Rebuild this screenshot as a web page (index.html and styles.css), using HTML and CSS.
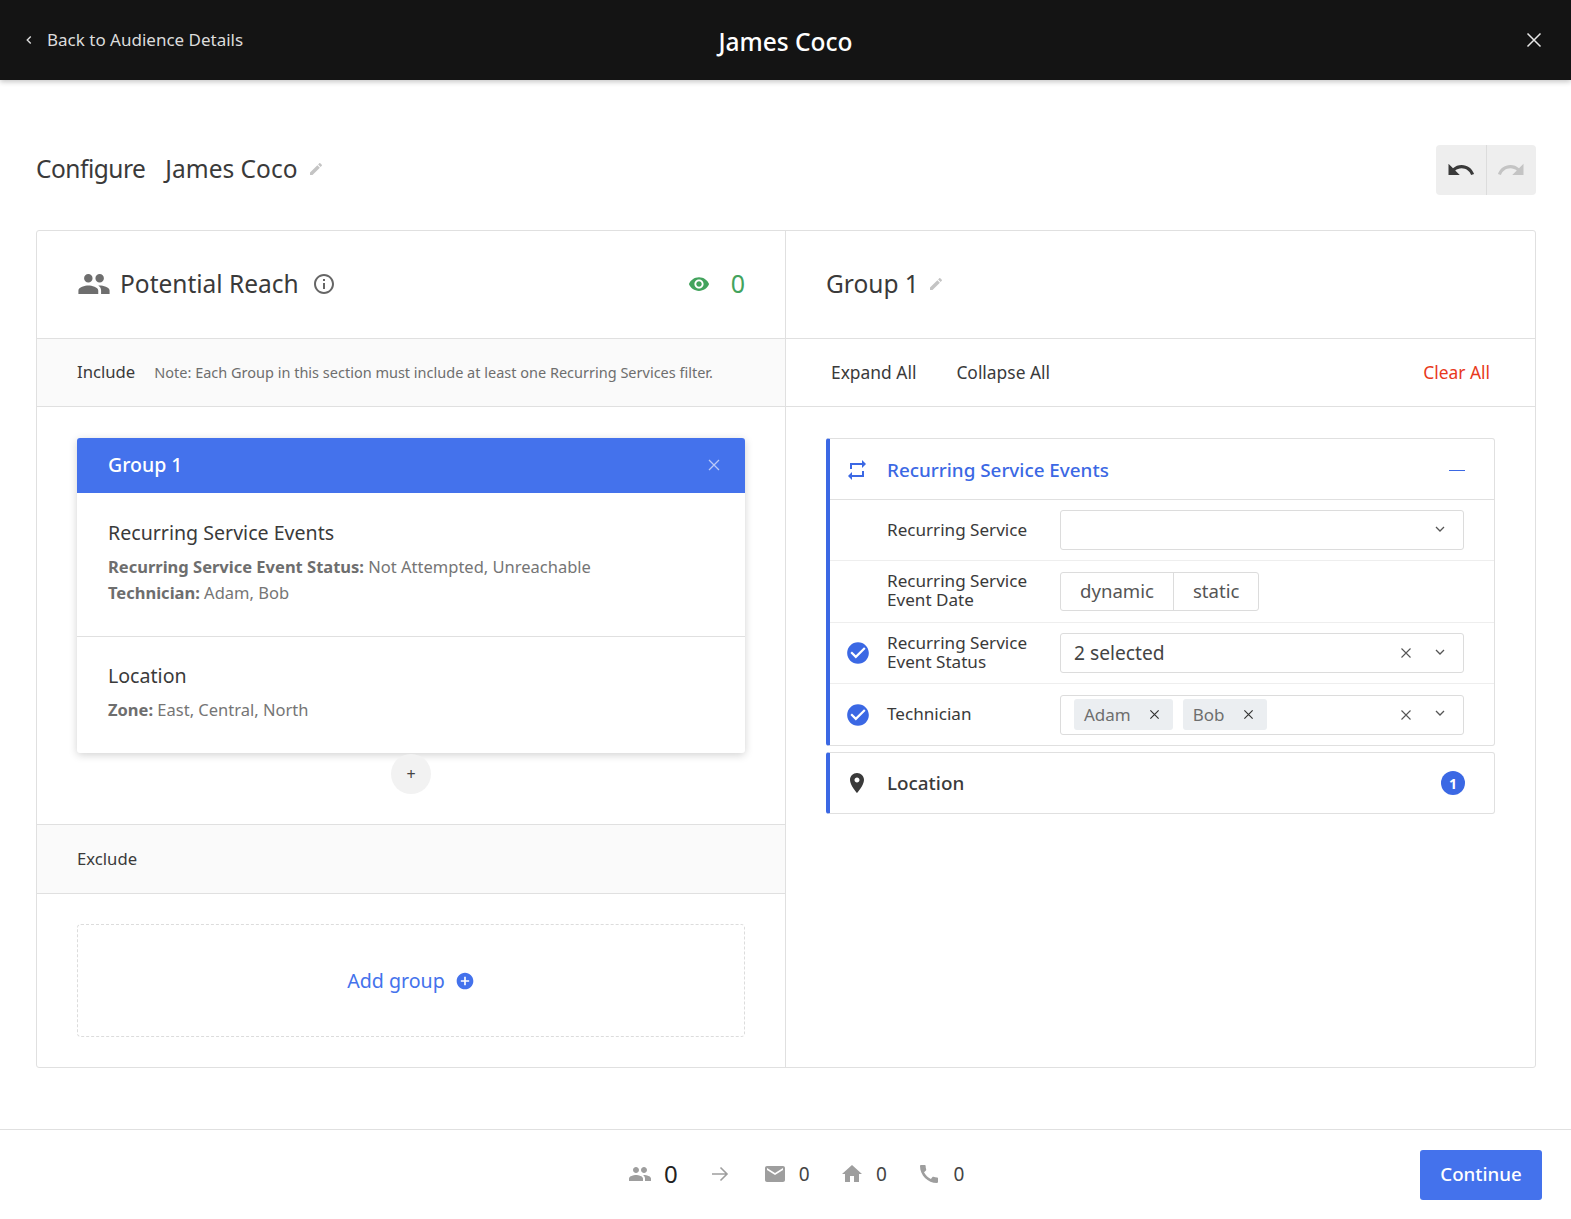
FILE: index.html
```html
<!DOCTYPE html>
<html lang="en">
<head>
<meta charset="utf-8">
<title>James Coco</title>
<link rel="stylesheet" href="styles.css">
</head>
<body>
<header class="topbar">
  <a class="back"><svg class="back-icon" viewBox="0 0 8 12"><path d="M5.500 3 2.500 6l3 3" fill="none" stroke="#ddd" stroke-width="1.2"/></svg>Back to Audience Details</a>
  <div class="topbar-title">James Coco</div>
  <svg class="close-icon" viewBox="0 0 16 16"><path d="M1.500 1.500l13 13M14.500 1.500l-13 13" stroke="#e8e8e8" stroke-width="1.500" fill="none"/></svg>
</header>
<main class="content">
  <div class="title-row">
    <div class="title"><span class="title-label">Configure</span><span>James Coco</span>
      <svg class="pencil pencil-title" viewBox="0 0 24 24"><path d="M3 17.250V21h3.750L17.810 9.940l-3.750-3.750L3 17.250zM20.710 7.040c.39-.39.39-1.020 0-1.410l-2.340-2.340c-.39-.39-1.020-.39-1.410 0l-1.830 1.830 3.750 3.750 1.830-1.830z"/></svg>
    </div>
    <div class="history">
      <button class="history-btn"><svg viewBox="0 0 24 24"><path fill="#3a3a3a" d="M12.500 8c-2.650 0-5.050.99-6.900 2.600L2 7v9h9l-3.620-3.620c1.390-1.160 3.160-1.880 5.120-1.880 3.540 0 6.550 2.310 7.600 5.500l2.370-.78C21.080 11.030 17.150 8 12.500 8z"/></svg></button>
      <button class="history-btn"><svg viewBox="0 0 24 24"><path fill="#c4c4c4" d="M18.400 10.600C16.550 8.990 14.150 8 11.500 8c-4.650 0-8.580 3.030-9.960 7.220L3.900 16c1.050-3.190 4.050-5.500 7.600-5.500 1.950 0 3.730.72 5.120 1.880L13 16h9V7l-3.600 3.600z"/></svg></button>
    </div>
  </div>
  <section class="board">
    <div class="col col-left">
      <div class="head-row">
        <div class="reach">
          <svg class="reach-people" viewBox="0 0 24 24"><path d="M16 11c1.660 0 2.990-1.340 2.990-3S17.660 5 16 5c-1.660 0-3 1.340-3 3s1.340 3 3 3zm-8 0c1.660 0 2.990-1.340 2.990-3S9.660 5 8 5C6.340 5 5 6.340 5 8s1.340 3 3 3zm0 2c-2.330 0-7 1.170-7 3.500V19h14v-2.500c0-2.330-4.670-3.500-7-3.500zm8 0c-.29 0-.62.02-.97.05 1.160.84 1.970 1.970 1.970 3.450V19h6v-2.500c0-2.330-4.670-3.500-7-3.500z"/></svg>
          <span class="heading">Potential Reach</span>
          <svg class="info" viewBox="0 0 24 24"><path d="M11 7h2v2h-2zm0 4h2v6h-2zm1-9C6.480 2 2 6.480 2 12s4.480 10 10 10 10-4.480 10-10S17.520 2 12 2zm0 18c-4.410 0-8-3.590-8-8s3.590-8 8-8 8 3.590 8 8-3.590 8-8 8z"/></svg>
        </div>
        <div class="reach-count">
          <svg class="eye" viewBox="0 0 24 24"><path d="M12 4.500C7 4.500 2.730 7.610 1 12c1.730 4.390 6 7.500 11 7.500s9.270-3.110 11-7.500c-1.730-4.390-6-7.500-11-7.500zM12 17c-2.760 0-5-2.240-5-5s2.240-5 5-5 5 2.240 5 5-2.240 5-5 5zm0-8c-1.660 0-3 1.340-3 3s1.340 3 3 3 3-1.340 3-3-1.340-3-3-3z"/></svg>
          <span>0</span>
        </div>
      </div>
      <div class="band"><span class="band-label">Include</span><span class="band-note">Note: Each Group in this section must include at least one Recurring Services filter.</span></div>
      <div class="include-body">
        <article class="group-card">
          <div class="group-head"><span>Group 1</span><svg class="group-x" viewBox="0 0 12 12"><path d="M1 1l10 10M11 1 1 11" stroke="#b9c9f7" stroke-width="1.300" fill="none"/></svg></div>
          <div class="group-item">
            <h3>Recurring Service Events</h3>
            <p><b>Recurring Service Event Status:</b> Not Attempted, Unreachable</p>
            <p><b>Technician:</b> Adam, Bob</p>
          </div>
          <div class="group-item group-item-last">
            <h3>Location</h3>
            <p><b>Zone:</b> East, Central, North</p>
          </div>
        </article>
        <button class="add-round">+</button>
      </div>
      <div class="band band-exclude"><span class="band-label">Exclude</span></div>
      <div class="exclude-body">
        <div class="add-group"><span>Add group</span>
          <svg class="add-icon" viewBox="0 0 24 24"><path d="M12 2C6.480 2 2 6.480 2 12s4.480 10 10 10 10-4.480 10-10S17.520 2 12 2zm5 11h-4v4h-2v-4H7v-2h4V7h2v4h4v2z"/></svg>
        </div>
      </div>
    </div>
    <div class="col col-right">
      <div class="head-row"><span class="heading">Group 1</span>
        <svg class="pencil pencil-group" viewBox="0 0 24 24"><path d="M3 17.250V21h3.750L17.810 9.940l-3.750-3.750L3 17.250zM20.710 7.040c.39-.39.39-1.020 0-1.410l-2.340-2.340c-.39-.39-1.020-.39-1.410 0l-1.830 1.830 3.750 3.750 1.830-1.830z"/></svg>
      </div>
      <div class="actions"><a>Expand All</a><a>Collapse All</a><a class="clear">Clear All</a></div>
      <div class="filters">
        <div class="panel">
          <div class="panel-head panel-head-open">
            <svg class="lead-icon repeat" viewBox="0 0 24 24"><path d="M7 7h10v3l4-4-4-4v3H5v6h2V7zm10 10H7v-3l-4 4 4 4v-3h12v-6h-2v4z"/></svg>
            <span class="panel-title panel-title-open">Recurring Service Events</span>
            <span class="minus"></span>
          </div>
          <div class="field">
            <span class="field-mark"></span>
            <span class="field-label">Recurring Service</span>
            <div class="select"><span class="select-val"></span>
              <svg class="chev" viewBox="0 0 12 12"><path d="M2 4l4 4 4-4" fill="none" stroke="#555" stroke-width="1.300"/></svg></div>
          </div>
          <div class="field field-tall">
            <span class="field-mark"></span>
            <span class="field-label field-label-wrap">Recurring Service<br>Event Date</span>
            <div class="toggle"><span>dynamic</span><span>static</span></div>
          </div>
          <div class="field">
            <svg class="field-mark check" viewBox="0 0 24 24"><path d="M12 2C6.480 2 2 6.480 2 12s4.480 10 10 10 10-4.480 10-10S17.520 2 12 2zm-2 15l-5-5 1.410-1.410L10 14.170l7.590-7.590L19 8l-9 9z"/></svg>
            <span class="field-label field-label-wrap">Recurring Service<br>Event Status</span>
            <div class="select"><span class="select-val">2 selected</span>
              <svg class="clear-x" viewBox="0 0 12 12"><path d="M1.500 1.500l9 9M10.500 1.500l-9 9" stroke="#555" stroke-width="1.100" fill="none"/></svg>
              <svg class="chev" viewBox="0 0 12 12"><path d="M2 4l4 4 4-4" fill="none" stroke="#555" stroke-width="1.300"/></svg></div>
          </div>
          <div class="field field-last">
            <svg class="field-mark check" viewBox="0 0 24 24"><path d="M12 2C6.480 2 2 6.480 2 12s4.480 10 10 10 10-4.480 10-10S17.520 2 12 2zm-2 15l-5-5 1.410-1.410L10 14.170l7.590-7.590L19 8l-9 9z"/></svg>
            <span class="field-label">Technician</span>
            <div class="select select-tags"><span class="select-val">
                <span class="tag">Adam<svg viewBox="0 0 12 12"><path d="M1.500 1.500l9 9M10.500 1.500l-9 9" stroke="#333" stroke-width="1.300" fill="none"/></svg></span>
                <span class="tag">Bob<svg viewBox="0 0 12 12"><path d="M1.500 1.500l9 9M10.500 1.500l-9 9" stroke="#333" stroke-width="1.300" fill="none"/></svg></span>
              </span>
              <svg class="clear-x" viewBox="0 0 12 12"><path d="M1.500 1.500l9 9M10.500 1.500l-9 9" stroke="#555" stroke-width="1.100" fill="none"/></svg>
              <svg class="chev" viewBox="0 0 12 12"><path d="M2 4l4 4 4-4" fill="none" stroke="#555" stroke-width="1.300"/></svg></div>
          </div>
        </div>
        <div class="panel">
          <div class="panel-head panel-head-closed">
            <svg class="lead-icon pin" viewBox="0 0 24 24"><path d="M12 2C8.130 2 5 5.130 5 9c0 5.250 7 13 7 13s7-7.750 7-13c0-3.870-3.130-7-7-7zm0 9.500c-1.380 0-2.500-1.120-2.500-2.500s1.120-2.500 2.500-2.500 2.500 1.120 2.500 2.500-1.120 2.500-2.500 2.500z"/></svg>
            <span class="panel-title">Location</span>
            <span class="badge">1</span>
          </div>
        </div>
      </div>
    </div>
  </section>
</main>
<footer class="footer">
  <div class="stats">
    <svg class="stat-icon stat-people" viewBox="0 0 24 24"><path d="M16 11c1.660 0 2.990-1.340 2.990-3S17.660 5 16 5c-1.660 0-3 1.340-3 3s1.340 3 3 3zm-8 0c1.660 0 2.990-1.340 2.990-3S9.660 5 8 5C6.340 5 5 6.340 5 8s1.340 3 3 3zm0 2c-2.330 0-7 1.170-7 3.500V19h14v-2.500c0-2.330-4.670-3.500-7-3.500zm8 0c-.29 0-.62.02-.97.05 1.160.84 1.970 1.970 1.970 3.450V19h6v-2.500c0-2.330-4.670-3.500-7-3.500z"/></svg>
    <span class="stat-main">0</span>
    <svg class="stat-arrow" viewBox="0 0 20 20"><path d="M2 10h15M10.500 3.500 17 10l-6.500 6.500" fill="none" stroke="#9e9e9e" stroke-width="1.600"/></svg>
    <svg class="stat-icon" viewBox="0 0 24 24"><path d="M20 4H4c-1.100 0-2 .9-2 2v12c0 1.100.9 2 2 2h16c1.100 0 2-.9 2-2V6c0-1.100-.9-2-2-2zm0 4l-8 5-8-5V6l8 5 8-5v2z"/></svg>
    <span class="stat-num">0</span>
    <svg class="stat-icon" viewBox="0 0 24 24"><path d="M10 20v-6h4v6h5v-8h3L12 3 2 12h3v8z"/></svg>
    <span class="stat-num">0</span>
    <svg class="stat-icon" viewBox="0 0 24 24"><path d="M20.010 15.380c-1.230 0-2.420-.2-3.530-.56-.35-.12-.74-.03-1.010.24l-1.570 1.970c-2.830-1.350-5.480-3.900-6.890-6.830l1.950-1.660c.27-.28.35-.67.24-1.020-.37-1.110-.56-2.300-.56-3.530 0-.54-.45-.99-.99-.99H4.190C3.650 3 3 3.240 3 3.990 3 13.280 10.730 21 20.010 21c.71 0 .99-.63.99-1.180v-3.450c0-.54-.45-.99-.99-.99z"/></svg>
    <span class="stat-num">0</span>
  </div>
  <button class="continue">Continue</button>
</footer>
</body>
</html>
```
FILE: styles.css
```css
* { box-sizing: border-box; }
html, body { margin: 0; padding: 0; }
body {
  font-family: "Noto Sans", "Open Sans", sans-serif;
  color: #3a3a3a;
  background: #fff;
  height: 1219px;
  overflow: hidden;
  display: flex;
  flex-direction: column;
}
.topbar {
  height: 80px;
  flex: none;
  background: #141414;
  box-shadow: 0 2px 5px rgba(0,0,0,.22);
  display: flex;
  align-items: center;
  position: relative;
  padding: 0 29px 0 24px;
  color: #fff;
}
.back { display: flex; align-items: center; font-size: 17px; color: #dcdcdc; flex: 1; margin-top: -1px; }
.back-icon { width: 10px; height: 14px; margin-right: 13px; }
.topbar-title { position: absolute; left: 0; right: 0; text-align: center; font-size: 24.5px; font-weight: 500; margin-top: 3px; }
.close-icon { width: 16px; height: 16px; margin-left: auto; flex: none; }
.content { flex: 1; padding: 65px 35px 0 36px; }
.title-row { display: flex; justify-content: space-between; align-items: center; height: 50px; margin-bottom: 35px; }
.title { display: flex; align-items: center; font-size: 24.5px; color: #3a3a3a; margin-bottom: 3px; }
.title-label { margin-right: 20px; letter-spacing: -0.5px; }
.pencil { width: 16px; height: 16px; fill: #c4c4c4; margin-left: 9px; }
.pencil-title { margin-left: 10px; margin-top: 1px; }
.history { display: flex; width: 100px; height: 50px; background: #eeeeee; border-radius: 4px; overflow: hidden; }
.history-btn { flex: 1; border: 0; background: none; padding: 0; display: flex; align-items: center; justify-content: center; }
.history-btn + .history-btn { border-left: 1px solid #dcdcdc; }
.history-btn svg { width: 30px; height: 30px; }
.board { display: flex; height: 838px; border: 1px solid #e0e0e0; border-radius: 3px; }
.col { flex: 1; min-width: 0; display: flex; flex-direction: column; }
.col-left { border-right: 1px solid #e0e0e0; flex: 0 0 749px; }
.head-row { height: 108px; padding: 0 40px 3px; display: flex; align-items: center; border-bottom: 1px solid #e0e0e0; flex: none; }
.reach { display: flex; align-items: center; flex: 1; }
.reach-people { width: 34px; height: 34px; fill: #6e6e6e; margin: 2px 9px 0 0; }
.heading { font-size: 24.5px; color: #3a3a3a; }
.info { width: 24px; height: 24px; fill: #666; margin: 2px 0 0 13px; }
.reach-count { display: flex; align-items: center; color: #43a35d; font-size: 25px; }
.eye { width: 22px; height: 22px; fill: #43a35d; margin: 2px 21px 0 0; }
.band { height: 68px; background: #fafafa; border-bottom: 1px solid #e0e0e0; padding: 0 40px 2px; display: flex; align-items: center; flex: none; }
.band-label { font-size: 16.7px; color: #3a3a3a; }
.band-note { font-size: 14.5px; color: #6e6e6e; margin-left: 19px; }
.band-exclude { border-top: 1px solid #e0e0e0; height: 70px; }
.include-body { height: 417px; padding: 31px 40px 0; display: flex; flex-direction: column; align-items: center; flex: none; }
.group-card { width: 100%; border-radius: 3px; box-shadow: 0 2px 8px rgba(0,0,0,.18); background: #fff; }
.group-head { height: 55px; background: #4472ec; border-radius: 3px 3px 0 0; color: #fff; font-size: 19.5px; font-weight: 500; display: flex; align-items: center; justify-content: space-between; padding: 0 25px 2px 31px; }
.group-x { width: 12px; height: 12px; }
.group-item { height: 144px; padding: 26px 31px 0; border-bottom: 1px solid #e0e0e0; }
.group-item-last { height: 116px; padding-top: 25px; border-bottom: 0; }
.group-item h3 { margin: 0 0 7px; font-size: 19.6px; font-weight: 400; line-height: 28px; color: #3a3a3a; }
.group-item p { margin: 0; font-size: 16.5px; line-height: 26px; color: #757575; }
.group-item b { font-weight: 700; color: #6e6e6e; }
.add-round { width: 40px; height: 40px; border-radius: 50%; border: 0; background: #f2f2f2; color: #444; font-size: 16px; margin-top: 1px; font-family: inherit; padding: 0; }
.exclude-body { padding: 30px 40px; flex: 1; }
.add-group { height: 113px; border: 1px dashed #dcdcdc; border-radius: 4px; display: flex; align-items: center; justify-content: center; color: #4472ec; font-size: 19.6px; }
.add-icon { width: 20px; height: 20px; fill: #4472ec; margin-left: 10px; }
.pencil-group { margin-left: 9px; margin-top: 1px; }
.actions { height: 68px; border-bottom: 1px solid #e0e0e0; padding: 0 45px 2px 45px; display: flex; align-items: center; gap: 40px; font-size: 17.4px; flex: none; }
.clear { margin-left: auto; color: #e8391c; }
.filters { padding: 31px 40px 0; display: flex; flex-direction: column; gap: 6px; }
.panel { border: 1px solid #e0e0e0; border-left: 4px solid #3b68e4; border-radius: 3px; }
.panel-head { display: flex; align-items: center; padding-right: 29px; font-size: 18.85px; }
.panel-head-open { height: 61px; border-bottom: 1px solid #e0e0e0; padding-top: 2px; }
.panel-head-closed { height: 60px; }
.lead-icon { width: 24px; height: 24px; margin: 0 18px 0 15px; flex: none; }
.repeat { fill: #3b68e4; }
.pin { fill: #3a3a3a; }
.panel-title { flex: 1; font-weight: 500; color: #3a3a3a; }
.panel-title-open { color: #3b68e4; }
.minus { width: 16px; height: 1px; background: #3b68e4; }
.badge { width: 24px; height: 24px; border-radius: 50%; background: #3b68e4; color: #fff; font-size: 14px; font-weight: 700; display: flex; align-items: center; justify-content: center; }
.field { display: flex; align-items: center; height: 61px; border-bottom: 1px solid #eeeeee; padding-right: 30px; }
.field-tall { height: 62px; }
.field-last { border-bottom: 0; }
.field-mark { width: 26px; height: 26px; margin: 0 16px 0 15px; flex: none; }
.check { fill: #3b68e4; }
.field-label { width: 173px; flex: none; font-size: 17.1px; line-height: 19px; color: #3a3a3a; margin-bottom: 2px; }
.field-label-wrap { margin-bottom: 3px; }
.select { flex: 1; height: 40px; border: 1px solid #dcdcdc; border-radius: 3px; display: flex; align-items: center; padding: 0 17px 0 13px; }
.select-val { flex: 1; display: flex; gap: 10px; font-size: 19.2px; color: #444; margin-bottom: 2px; }
.select-tags .select-val { margin-bottom: 0; }
.clear-x { width: 12px; height: 12px; margin-right: 22px; }
.chev { width: 12px; height: 12px; margin-top: -3px; }
.tag { display: flex; align-items: center; height: 31px; padding: 0 13px 1px 10px; background: #ebeef1; border-radius: 3px; color: #6e6e6e; font-size: 17px; gap: 18px; }
.tag svg { width: 11px; height: 11px; margin-top: 1px; }
.toggle { display: flex; border: 1px solid #dcdcdc; border-radius: 3px; height: 39px; }
.toggle span { display: flex; align-items: center; padding: 0 19px 2px; font-size: 18.6px; color: #555; }
.toggle span + span { border-left: 1px solid #dcdcdc; }
.footer { height: 90px; flex: none; border-top: 1px solid #e0e0e0; display: flex; align-items: center; position: relative; justify-content: flex-end; padding-right: 29px; }
.stats { position: absolute; left: 628px; top: 0; bottom: 2px; display: flex; align-items: center; }
.stat-icon { width: 24px; height: 24px; fill: #9e9e9e; }
.stat-people { margin-right: 12px; }
.stat-main { font-size: 24px; color: #222; margin-right: 32px; }
.stat-arrow { width: 20px; height: 20px; margin-right: 33px; }
.stat-num { font-size: 19px; color: #444; margin: 0 30.5px 0 12px; }
.continue { width: 122px; height: 50px; background: #4472ec; color: #fff; border: 0; border-radius: 3px; font-family: inherit; font-size: 18.7px; font-weight: 500; padding: 0 0 2px; }
```
